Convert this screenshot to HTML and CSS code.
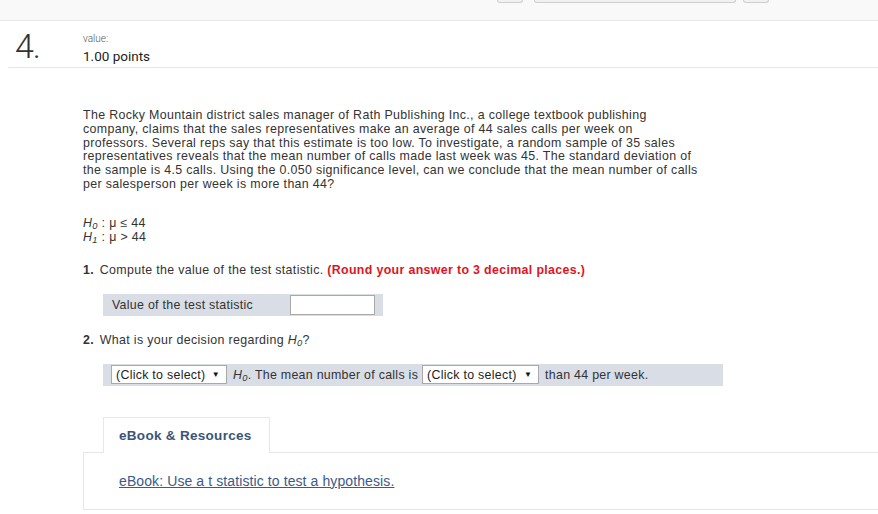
FILE: index.html
```html
<!DOCTYPE html>
<html>
<head>
<meta charset="utf-8">
<link rel="stylesheet" href="styles.css">
</head>
<body>
<div class="topbar">
  <div class="tools">
    <span class="tool t1"></span>
    <span class="tool t2"></span>
    <span class="tool t3"></span>
  </div>
</div>
<div class="qhead">
  <div class="qnum">4.</div>
  <div class="qval">
    <div class="vlabel">value:</div>
    <div class="vpoints">1.00 points</div>
  </div>
</div>
<div class="question">
  <p class="stem">The Rocky Mountain district sales manager of Rath Publishing Inc., a college textbook publishing company, claims that the sales representatives make an average of 44 sales calls per week on professors. Several reps say that this estimate is too low. To investigate, a random sample of 35 sales representatives reveals that the mean number of calls made last week was 45. The standard deviation of the sample is 4.5 calls. Using the 0.050 significance level, can we conclude that the mean number of calls per salesperson per week is more than 44?</p>
  <div class="hyp">
    <div><i>H<sub>0</sub></i> : μ ≤ 44</div>
    <div><i>H<sub>1</sub></i> : μ &gt; 44</div>
  </div>
  <div class="part"><b class="pn">1.</b> Compute the value of the test statistic. <b class="red">(Round your answer to 3 decimal places.)</b></div>
  <div class="answer box1">
    <span class="alabel">Value of the test statistic</span>
    <input class="ainput" type="text">
  </div>
  <div class="part part2"><b class="pn">2.</b> What is your decision regarding <i>H<sub>0</sub></i>?</div>
  <div class="answer box2">
    <span class="sel s1">(Click to select)<span class="arr">▼</span></span>
    <span class="txt"><i>H<sub>0</sub></i>. The mean number of calls is</span>
    <span class="sel s2">(Click to select)<span class="arr">▼</span></span>
    <span class="txt">than 44 per week.</span>
  </div>
  <div class="tabs">
    <div class="tab">eBook &amp; Resources</div>
  </div>
  <div class="panel">
    <a class="elink" href="#">eBook: Use a t statistic to test a hypothesis.</a>
  </div>
</div>
</body>
</html>
```
FILE: styles.css
```css
html, body {
  margin: 0;
  padding: 0;
  background: #fff;
}
body {
  font-family: "Liberation Sans", Arial, sans-serif;
  color: #333;
}
.topbar {
  height: 20px;
  background: #f9f9f9;
  border-bottom: 1px solid #e8e8e8;
}
.tools {
  display: flex;
  padding-left: 497px;
}
.tool {
  display: block;
  height: 2px;
  border: 1px solid #cfcfcf;
  border-top: none;
  border-radius: 0 0 3px 3px;
  background: #f1f1f1;
}
.t1 { width: 24px; }
.t2 { width: 200px; margin-left: 11px; }
.t3 { width: 24px; margin-left: 7px; }

.qhead {
  display: flex;
  margin-left: 8px;
  height: 46px;
  border-bottom: 1px solid #e6e6e6;
  font-family: Roboto, "Liberation Sans", sans-serif;
}
.qnum {
  width: 75px;
  padding-left: 7px;
  box-sizing: border-box;
  font-size: 34px;
  font-weight: 300;
  line-height: 32px;
  margin-top: 9px;
  color: #333;
  letter-spacing: -1px;
}
.qval {
  margin-top: 12px;
}
.vlabel {
  font-size: 10px;
  line-height: 12px;
  color: #555;
  font-weight: 300;
}
.vpoints {
  font-size: 13.5px;
  line-height: 16px;
  color: #222;
  margin-top: 3px;
}

.question {
  padding-left: 83px;
  font-size: 12.4px;
  letter-spacing: 0.34px;
}
.stem {
  margin: 41px 0 0 0;
  width: 618px;
  line-height: 13.8px;
}
.hyp {
  margin-top: 24px;
  line-height: 14.5px;
}
sub {
  font-size: 75%;
  vertical-align: -2px;
  line-height: 0;
}
.part {
  margin-top: 18px;
  line-height: 14px;
}
.part2 {
  margin-top: 17px;
}
.pn {
  color: #333;
  margin-right: 2px;
}
.red {
  color: #e0141e;
}
.answer {
  display: flex;
  align-items: center;
  background: #d9dde6;
  margin-left: 20px;
  height: 22px;
  letter-spacing: 0.28px;
}
.box1 {
  width: 280px;
  margin-top: 17px;
}
.alabel {
  padding-left: 9px;
  width: 178px;
}
.ainput {
  width: 85px;
  height: 20px;
  box-sizing: border-box;
  border: 1px solid #a9a9a9;
  margin: 0;
  padding: 0;
  background: #fff;
}
.box2 {
  width: 620px;
  margin-top: 17px;
  padding-left: 8px;
  box-sizing: border-box;
}
.sel {
  display: inline-flex;
  align-items: center;
  justify-content: space-between;
  height: 19px;
  box-sizing: border-box;
  border: 1px solid #a9a9a9;
  background: #fff;
  padding: 0 6px 0 4px;
  color: #222;
}
.s1 { width: 116px; }
.s2 { width: 117px; }
.arr {
  font-size: 8px;
  color: #111;
}
.txt {
  padding: 0 4px 0 6px;
}
.tabs {
  display: flex;
  margin-top: 30px;
  padding-left: 20px;
}
.tab {
  width: 167px;
  height: 36px;
  box-sizing: border-box;
  border: 1px solid #e8e8e8;
  border-bottom: none;
  background: #fff;
  padding-left: 15px;
  display: flex;
  align-items: center;
  font-weight: bold;
  font-size: 13.5px;
  letter-spacing: 0.3px;
  color: #3b5478;
  position: relative;
  top: 1px;
}
.panel {
  height: 58px;
  box-sizing: border-box;
  border: 1px solid #e6e6e6;
  border-right: none;
  padding: 20px 0 0 35px;
}
.elink {
  color: #3b5a8a;
  font-size: 14px;
  letter-spacing: 0.1px;
  text-decoration: underline;
}
```
